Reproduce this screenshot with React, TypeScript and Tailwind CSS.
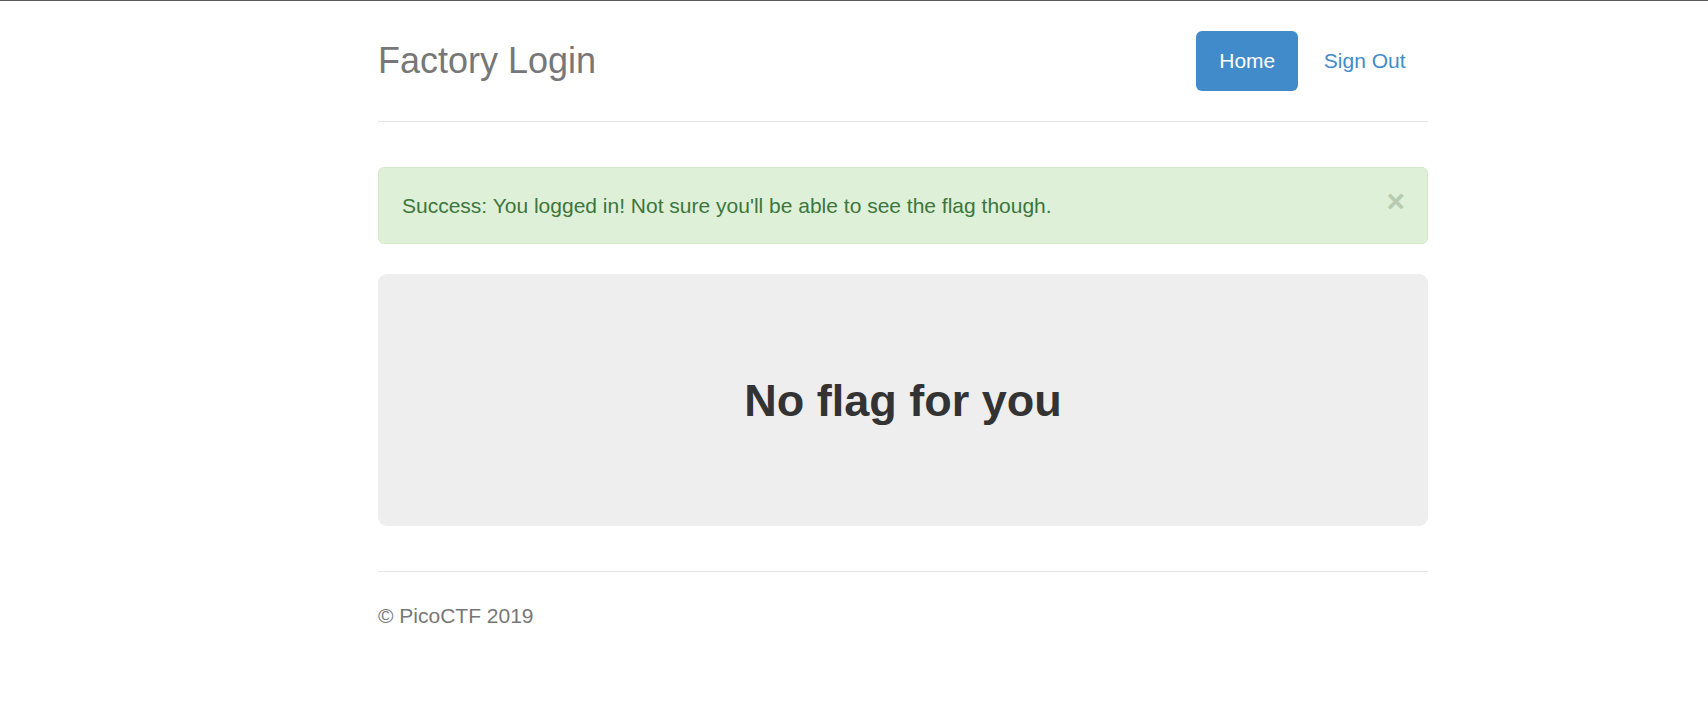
import React from "react";

export default function App() {
  return (
    <div
      className="min-h-[718px] bg-white border-t border-[#5a5a5a]"
      style={{ fontFamily: '"Liberation Sans", Arial, Helvetica, sans-serif' }}
    >
      <div className="pl-[378px] pt-[30px]">
        <div className="w-[1050px]">
          {/* Header */}
          <div className="flex items-start justify-between pb-[30px] border-b border-[#e5e5e5] mb-[45px]">
            <h3 className="text-[36px] leading-[60px] text-[#777] font-normal m-0">
              Factory Login
            </h3>
            <ul className="flex gap-[3px]">
              <li>
                <a className="block px-[23px] h-[60px] leading-[60px] text-[21px] rounded-[6px] bg-[#428bca] text-white">
                  Home
                </a>
              </li>
              <li>
                <a className="block px-[22.5px] h-[60px] leading-[60px] text-[21px] rounded-[6px] text-[#428bca]">
                  Sign Out
                </a>
              </li>
            </ul>
          </div>

          {/* Alert */}
          <div className="flex items-start justify-between bg-[#dff0d8] border border-[#d6e9c6] rounded-[6px] pl-[23px] pr-[22px] py-[22.5px] mb-[30px] text-[#3c763d]">
            <span className="text-[21px] leading-[30px]">
              Success: You logged in! Not sure you'll be able to see the flag though.
            </span>
            <span className="relative top-[-5px] h-[30px] text-[31.5px] leading-[30px] font-bold text-[#b6cbb0]">
              ×
            </span>
          </div>

          {/* Jumbotron */}
          <div className="bg-[#eeeeee] rounded-[9px] h-[252px] flex items-center justify-center mb-[45px]">
            <h2 className="relative top-[1px] text-[45px] leading-[50px] font-bold text-[#333]">
              No flag for you
            </h2>
          </div>

          {/* Footer */}
          <div className="border-t border-[#e5e5e5] pt-[29px] text-[21px] leading-[30px] text-[#777]">
            © PicoCTF 2019
          </div>
        </div>
      </div>
    </div>
  );
}
